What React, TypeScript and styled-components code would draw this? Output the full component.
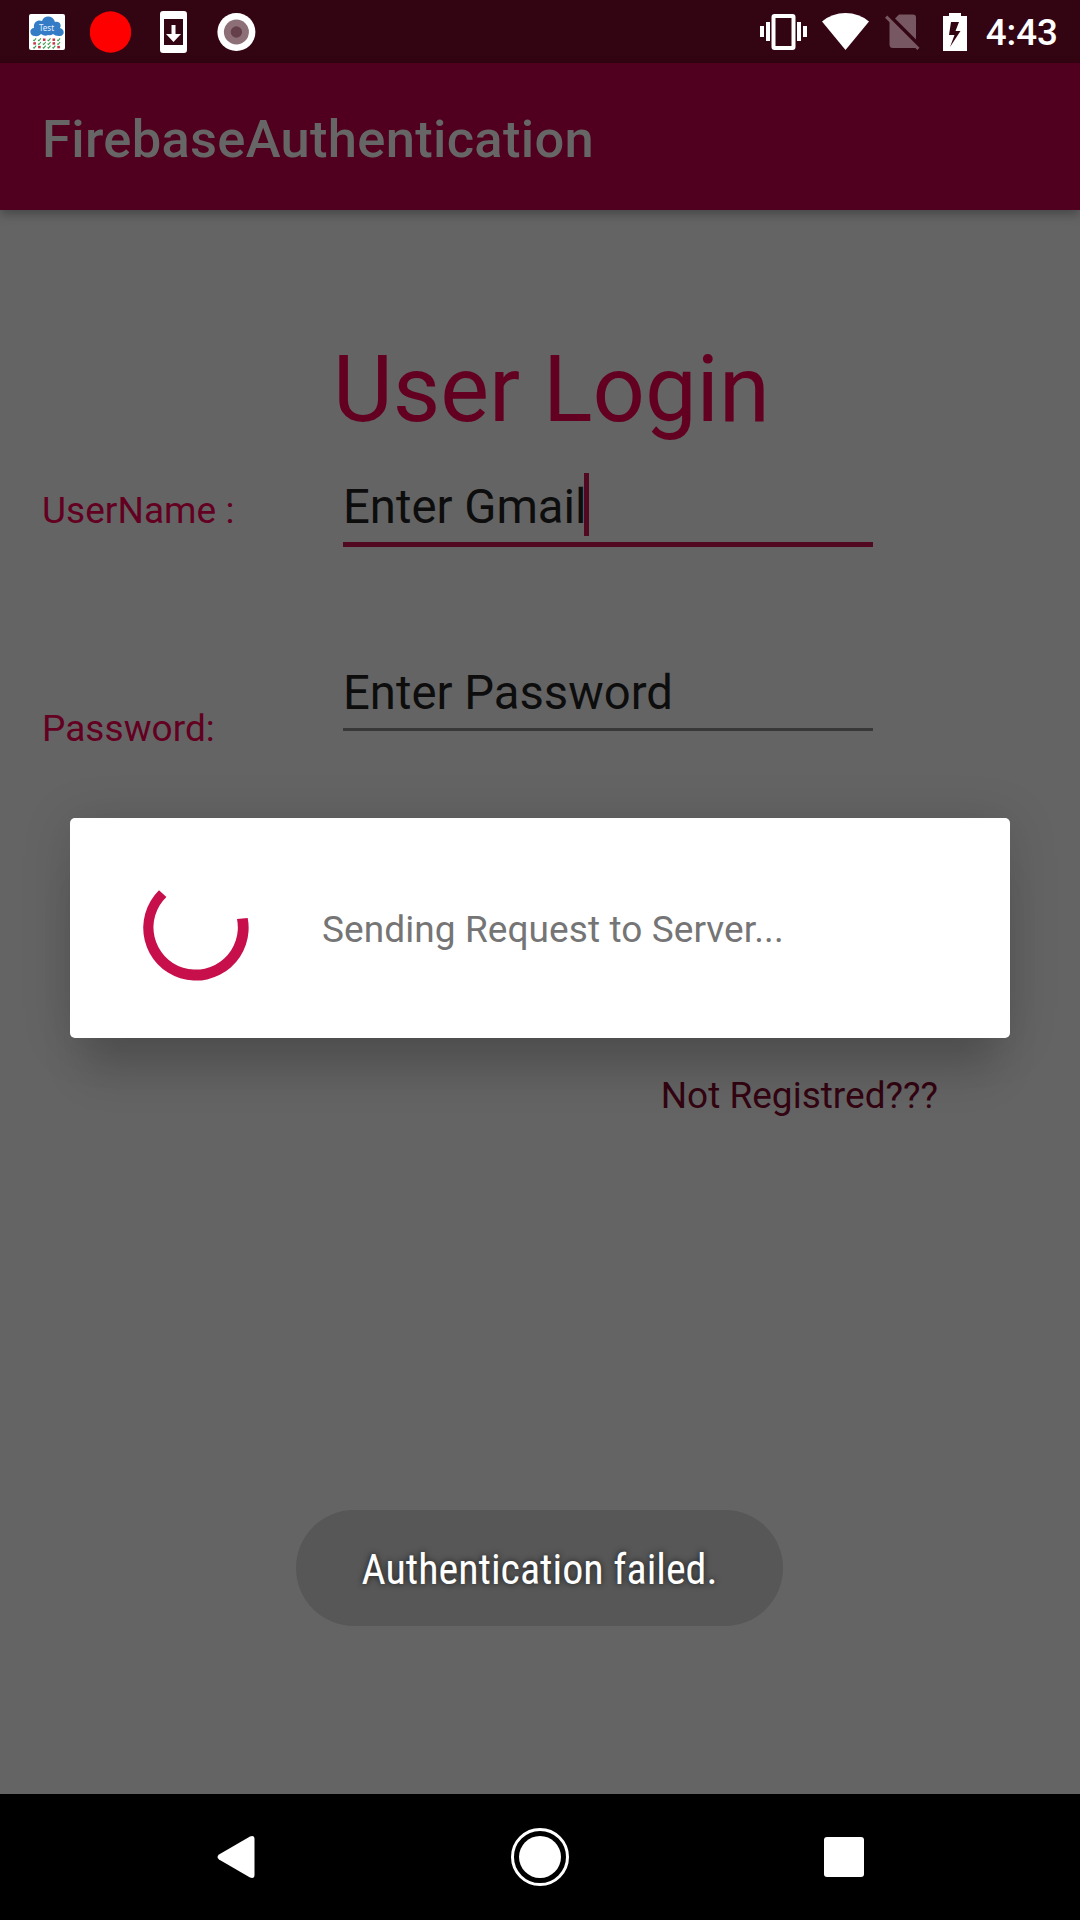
import React from "react";
import styled, { createGlobalStyle } from "styled-components";

const GlobalStyle = createGlobalStyle`
  *, *::before, *::after { box-sizing: border-box; }
  body { margin: 0; background: #646464; }
`;

const Screen = styled.div`
  position: relative;
  display: flex;
  flex-direction: column;
  width: 1080px;
  height: 1920px;
  overflow: hidden;
  background: #646464;
  font-family: Roboto, "Noto Sans", sans-serif;
  white-space: nowrap;
`;

const StatusBar = styled.header`
  display: flex;
  justify-content: space-between;
  flex: none;
  height: 63px;
  padding: 0 22px 0 29px;
  background: #330411;
`;

const Notifications = styled.div`
  display: flex;
  align-items: center;
  gap: 25px;
`;

const SystemIcons = styled.div`
  display: flex;
  align-items: center;
`;

const Glyph = styled.svg<{ $gap?: number }>`
  display: block;
  flex: none;
  margin-right: ${(p) => p.$gap ?? 0}px;
`;

const Clock = styled.time`
  padding-top: 3px;
  color: #fff;
  font-size: 36.75px;
  font-weight: 500;
  line-height: 44px;
`;

const AppBar = styled.div`
  display: flex;
  align-items: center;
  flex: none;
  z-index: 1;
  height: 147px;
  padding: 5px 42px 0;
  background: #50001e;
  box-shadow: 0 4px 10px rgba(0, 0, 0, 0.3);
`;

const AppTitle = styled.h1`
  margin: 0;
  color: #666;
  font-size: 52.5px;
  font-weight: 500;
  letter-spacing: 0.29px;
  line-height: 62px;
`;

const Form = styled.main`
  display: flex;
  flex-direction: column;
  flex: 1;
  padding: 126px 42px 0;
`;

const Heading = styled.h2`
  margin: 0 0 29px 291px;
  color: #630021;
  font-size: 92px;
  font-weight: 400;
  line-height: 108px;
`;

const FormRow = styled.div<{ $bottom: number }>`
  display: flex;
  align-items: flex-start;
  margin-bottom: ${(p) => p.$bottom}px;
`;

const Label = styled.label<{ $top: number }>`
  width: 301px;
  padding-top: ${(p) => p.$top}px;
  color: #630021;
  font-size: 37px;
  letter-spacing: 0.05px;
  line-height: 44px;
`;

const Field = styled.div<{ $focused?: boolean }>`
  display: flex;
  width: 530px;
  height: ${(p) => (p.$focused ? 74 : 72)}px;
  border-bottom: ${(p) => (p.$focused ? "5px solid #520820" : "3px solid #383838")};
`;

const FieldText = styled.span`
  padding-top: 3px;
  color: #0d0d0d;
  font-size: 47.25px;
  line-height: 63px;
`;

const Caret = styled.i`
  width: 5px;
  height: 63px;
  margin-left: -3px;
  background: #520820;
`;

const RegisterLink = styled.a`
  align-self: flex-end;
  margin-right: 100px;
  color: #330411;
  font-size: 37px;
  line-height: 44px;
`;

const Dialog = styled.div`
  position: absolute;
  top: 818px;
  left: 70px;
  z-index: 2;
  display: flex;
  align-items: center;
  gap: 73px;
  width: 940px;
  height: 220px;
  padding-left: 73px;
  border-radius: 5px;
  background: #fff;
  box-shadow: 0 50px 40px -14px rgba(0, 0, 0, 0.14), 0 4px 50px rgba(0, 0, 0, 0.15);
`;

const DialogText = styled.p`
  margin: 0;
  padding-top: 4px;
  color: #757575;
  font-size: 37px;
  letter-spacing: 0.08px;
  line-height: 44px;
`;

const Toast = styled.div`
  position: absolute;
  top: 1510px;
  left: 296px;
  z-index: 2;
  display: flex;
  align-items: center;
  justify-content: center;
  width: 487px;
  height: 116px;
  border-radius: 58px;
  background: #575757;
`;

const ToastText = styled.span`
  padding-top: 3px;
  color: #fff;
  font-family: "Roboto Condensed", Roboto, sans-serif;
  font-size: 42px;
  font-stretch: 75%;
  line-height: 50px;
  text-shadow: 0 0 6px rgba(0, 0, 0, 0.7);
`;

const NavBar = styled.nav`
  display: grid;
  grid-template-columns: 216px 1fr 58px 1fr 216px;
  align-items: center;
  flex: none;
  height: 126px;
  background: #000;
`;

const NavGlyph = styled.svg<{ $column: number; $end?: boolean }>`
  display: block;
  grid-row: 1;
  grid-column: ${(p) => p.$column};
  justify-self: ${(p) => (p.$end ? "end" : "start")};
`;

// Each row is a line of test results: "x" failed, "v" passed.
const results = ["vvxvxv", "xvvvxv", "vxvvvx"];

const TestIcon = () => (
  <Glyph width="36" height="36" viewBox="0 0 36 36">
    <rect width="36" height="36" rx="2" fill="#fff" />
    <path
      d="M6 22C0 22 0 14 5 14C4 8 9 5 13 7C15 1 24 1 26 8C30 7 33 10 31 14C37 16 35 23 30 22Q26 22 24 20Q22 22 19 21Q16 23 12 20Q9 23 6 22Z"
      fill="#347dc6"
    />
    <text x="17.5" y="16.8" textAnchor="middle" fontFamily="Noto Sans" fontSize="8" fill="#e6f0fa">
      Test
    </text>
    {results.map((row, r) =>
      row.split("").map((cell, c) => {
        const x = 5.6 + c * 4.8;
        const y = 25.6 + r * 3.7;
        return cell === "x" ? (
          <rect key={`${r}${c}`} x={x - 1.3} y={y - 1.1} width="2.6" height="2.4" fill="#c33340" />
        ) : (
          <path key={`${r}${c}`} d={`M${x - 1.4} ${y + 0.3}l.9 .9l2-2.5`} stroke="#3c9a4b" strokeWidth="1.1" fill="none" />
        );
      })
    )}
  </Glyph>
);

export default function App() {
  return (
    <>
      <GlobalStyle />
      <Screen>
        <StatusBar>
          <Notifications>
            <TestIcon />
            <Glyph $gap={4} width="41" height="42" viewBox="0 0 41 42">
              <ellipse cx="20.5" cy="21" rx="20.7" ry="20.7" fill="#f00" />
            </Glyph>
            <Glyph $gap={5} width="27" height="42" viewBox="0 0 27 42">
              <path fillRule="evenodd" fill="#fff" d="M3 0H24Q27 0 27 3V39Q27 42 24 42H3Q0 42 0 39V3Q0 0 3 0ZM4 8V34H23V8Z" />
              <path fill="#fff" d="M11.5 14H15.5V23H21L13.5 31L6 23H11.5Z" />
            </Glyph>
            <Glyph width="39" height="38" viewBox="0 0 39 38">
              <circle cx="19.400" cy="19" r="19" fill="#fff" />
              <circle cx="19.400" cy="19" r="12.5" fill="#8c6f77" />
              <circle cx="19.400" cy="19" r="5.7" fill="#65404a" />
            </Glyph>
          </Notifications>
          <SystemIcons>
            <Glyph $gap={15} width="47" height="36" viewBox="0 0 47 36" fill="#fff">
              <path d="M0 12H4V23H0ZM6 8H10V27H6ZM37 8H41V27H37ZM43 12H47V23H43Z" />
              <path fillRule="evenodd" d="M14.5 0H32.5Q35.500 0 35.500 3V33Q35.500 36 32.500 36H14.5Q11.500 36 11.500 33V3Q11.500 0 14.5 0ZM15.500 4V32H31.500V4Z" />
            </Glyph>
            <Glyph $gap={16} width="47" height="37" viewBox="0 0 47 37">
              <path d="M0 8.500Q10 0 23.500 0T47 8.500L23.500 37Z" fill="#fff" />
            </Glyph>
            <Glyph $gap={23} width="35" height="38" viewBox="0 0 35 38">
              <path
                fill="#775761"
                d="M10 5.500L14 1.500H28Q31 1.500 31 4.500V26.500ZM2.200 2.500L34.500 34.800L32.300 37L30.300 35H8Q4.500 35 4.500 31.500V9.200L0 4.700Z"
              />
            </Glyph>
            <Glyph $gap={19} width="24" height="38" viewBox="0 0 24 38">
              <path fillRule="evenodd" fill="#fff" d="M6 0H18V3H24V38H0V3H6ZM8 9L6 22H11.500L7 34L17.500 18H12.500L16 9Z" />
            </Glyph>
            <Clock>4:43</Clock>
          </SystemIcons>
        </StatusBar>

        <AppBar>
          <AppTitle>FirebaseAuthentication</AppTitle>
        </AppBar>

        <Form>
          <Heading>User Login</Heading>
          <FormRow $bottom={112}>
            <Label $top={16}>UserName :</Label>
            <Field $focused>
              <FieldText>Enter Gmail</FieldText>
              <Caret />
            </Field>
          </FormRow>
          <FormRow $bottom={323}>
            <Label $top={48}>Password:</Label>
            <Field>
              <FieldText>Enter Password</FieldText>
            </Field>
          </FormRow>
          <RegisterLink>Not Registred???</RegisterLink>
        </Form>

        <NavBar>
          <NavGlyph $column={2} width="39" height="44" viewBox="0 0 39 44">
            <path d="M3 19.500L34 1.500Q38.500 0 38.500 4V40Q38.500 44 34 42.500L3 24.500Q0 22 3 19.500Z" fill="#fff" />
          </NavGlyph>
          <NavGlyph $column={3} width="58" height="58" viewBox="0 0 58 58">
            <circle cx="29" cy="29" r="27.500" fill="none" stroke="#fff" strokeWidth="3" />
            <circle cx="29" cy="29" r="21" fill="#fff" />
          </NavGlyph>
          <NavGlyph $column={4} $end width="40" height="40" viewBox="0 0 40 40">
            <rect width="40" height="40" rx="3" fill="#fff" />
          </NavGlyph>
        </NavBar>

        <Dialog>
          <Glyph width="106" height="106" viewBox="0 0 106 106">
            <path d="M104.700 43A52.700 52.700 0 1 1 16 15.300L23.400 22A42.200 42.200 0 1 0 94 44Z" fill="#c60f4b" />
          </Glyph>
          <DialogText>Sending Request to Server...</DialogText>
        </Dialog>

        <Toast>
          <ToastText>Authentication failed.</ToastText>
        </Toast>
      </Screen>
    </>
  );
}
